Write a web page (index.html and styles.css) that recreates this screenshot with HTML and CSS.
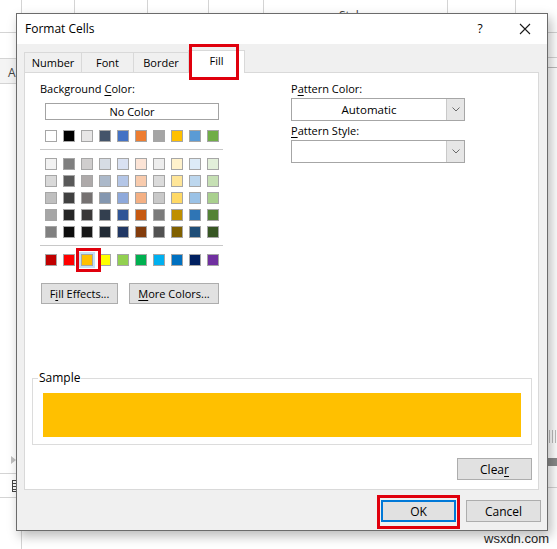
FILE: index.html
```html
<!DOCTYPE html>
<html lang="en">
<head>
<meta charset="utf-8">
<title>Format Cells</title>
<link rel="stylesheet" href="styles.css">
</head>
<body>
<div class="sheet">
  <div class="gl v x21"></div>
  <div class="gl vt x74"></div>
  <div class="gl vt x147"></div>
  <div class="gl vt x208"></div>
  <div class="gl vt x263"></div>
  <div class="gl vt x447"></div>
  <div class="gl vt x515"></div>
  <span class="styles-text">Styles</span>
  <div class="gl hl y32"></div>
  <div class="gl hl y58"></div>
  <div class="left-band"><span>A</span></div>
  <div class="gl hl y83"></div>
  <div class="gl hr y32"></div>
  <div class="gl hr y57"></div>
  <div class="gl hr y67"></div>
  <div class="tri"></div>
  <div class="gl hl y473"></div>
  <div class="sheet-icon"></div>
  <div class="gl hl y497"></div>
  <div class="grip"></div>
  <div class="rbar"></div>
  <div class="gl hr y487"></div>
  <span class="watermark">wsxdn.com</span>
</div>

<div class="dialog">
  <div class="titlebar">
    <span class="title">Format Cells</span>
    <span class="help">?</span>
    <svg class="close" width="12" height="12" viewBox="0 0 12 12"><path d="M1 1 L11 11 M11 1 L1 11" stroke="#1a1a1a" stroke-width="1.1" fill="none"/></svg>
  </div>

  <div class="tabs">
    <div class="tab t-number">Number</div>
    <div class="tab t-font">Font</div>
    <div class="tab t-border">Border</div>
    <div class="tab t-fill active">Fill</div>
  </div>

  <div class="panel">
    <div class="cols">
      <div class="left">
        <div class="label">Background <u>C</u>olor:</div>
        <div class="nocolor">No Color</div>
        <div class="row first">
          <span class="sw" style="background:#FFFFFF"></span><span class="sw" style="background:#000000"></span><span class="sw" style="background:#E7E6E6"></span><span class="sw" style="background:#44546A"></span><span class="sw" style="background:#4472C4"></span><span class="sw" style="background:#ED7D31"></span><span class="sw" style="background:#A5A5A5"></span><span class="sw" style="background:#FFC000"></span><span class="sw" style="background:#5B9BD5"></span><span class="sw" style="background:#70AD47"></span>
        </div>
        <div class="sep"></div>
        <div class="tints">
          <div class="row">
            <span class="sw" style="background:#F2F2F2"></span><span class="sw" style="background:#7F7F7F"></span><span class="sw" style="background:#D0CECE"></span><span class="sw" style="background:#D6DCE4"></span><span class="sw" style="background:#D9E1F2"></span><span class="sw" style="background:#FCE4D6"></span><span class="sw" style="background:#EDEDED"></span><span class="sw" style="background:#FFF2CC"></span><span class="sw" style="background:#DDEBF7"></span><span class="sw" style="background:#E2EFDA"></span>
          </div>
          <div class="row">
            <span class="sw" style="background:#D9D9D9"></span><span class="sw" style="background:#595959"></span><span class="sw" style="background:#AEAAAA"></span><span class="sw" style="background:#ACB9CA"></span><span class="sw" style="background:#B4C6E7"></span><span class="sw" style="background:#F8CBAD"></span><span class="sw" style="background:#DBDBDB"></span><span class="sw" style="background:#FFE699"></span><span class="sw" style="background:#BDD7EE"></span><span class="sw" style="background:#C6E0B4"></span>
          </div>
          <div class="row">
            <span class="sw" style="background:#BFBFBF"></span><span class="sw" style="background:#404040"></span><span class="sw" style="background:#757171"></span><span class="sw" style="background:#8497B0"></span><span class="sw" style="background:#8EA9DB"></span><span class="sw" style="background:#F4B084"></span><span class="sw" style="background:#C9C9C9"></span><span class="sw" style="background:#FFD966"></span><span class="sw" style="background:#9BC2E6"></span><span class="sw" style="background:#A9D08E"></span>
          </div>
          <div class="row">
            <span class="sw" style="background:#A6A6A6"></span><span class="sw" style="background:#262626"></span><span class="sw" style="background:#3A3838"></span><span class="sw" style="background:#333F4F"></span><span class="sw" style="background:#2F5597"></span><span class="sw" style="background:#C65911"></span><span class="sw" style="background:#7B7B7B"></span><span class="sw" style="background:#BF8F00"></span><span class="sw" style="background:#2F75B5"></span><span class="sw" style="background:#548235"></span>
          </div>
          <div class="row">
            <span class="sw" style="background:#808080"></span><span class="sw" style="background:#0D0D0D"></span><span class="sw" style="background:#161616"></span><span class="sw" style="background:#222B35"></span><span class="sw" style="background:#203764"></span><span class="sw" style="background:#833C0C"></span><span class="sw" style="background:#525252"></span><span class="sw" style="background:#806000"></span><span class="sw" style="background:#1F4E78"></span><span class="sw" style="background:#375623"></span>
          </div>
        </div>
        <div class="sep"></div>
        <div class="row std">
          <span class="sw" style="background:#C00000"></span><span class="sw" style="background:#FF0000"></span><span class="sw selected" style="background:#FFC000"></span><span class="sw" style="background:#FFFF00"></span><span class="sw" style="background:#92D050"></span><span class="sw" style="background:#00B050"></span><span class="sw" style="background:#00B0F0"></span><span class="sw" style="background:#0070C0"></span><span class="sw" style="background:#002060"></span><span class="sw" style="background:#7030A0"></span>
        </div>
        <div class="btnrow">
          <button class="btn fill-effects">F<u>i</u>ll Effects...</button>
          <button class="btn more-colors"><u>M</u>ore Colors...</button>
        </div>
      </div>
      <div class="right">
        <div class="label">P<u>a</u>ttern Color:</div>
        <div class="combo">
          <span class="combo-text">Automatic</span>
          <span class="combo-btn"><svg width="8" height="5" viewBox="0 0 8 5"><path d="M0.5 0.5 L4 4 L7.5 0.5" stroke="#6a6a6a" stroke-width="1" fill="none"/></svg></span>
        </div>
        <div class="label"><u>P</u>attern Style:</div>
        <div class="combo">
          <span class="combo-text"></span>
          <span class="combo-btn"><svg width="8" height="5" viewBox="0 0 8 5"><path d="M0.5 0.5 L4 4 L7.5 0.5" stroke="#6a6a6a" stroke-width="1" fill="none"/></svg></span>
        </div>
      </div>
    </div>

    <div class="sample">
      <span class="sample-label">Sample</span>
      <div class="sample-fill"></div>
    </div>

    <div class="clear-row">
      <button class="btn clear">Clea<u>r</u></button>
    </div>
  </div>

  <div class="footer">
    <span class="ok-wrap"><button class="btn ok">OK</button></span>
    <button class="btn cancel">Cancel</button>
  </div>
</div>
</body>
</html>
```

FILE: styles.css
```css
* { box-sizing: border-box; }
html, body { margin: 0; padding: 0; }
body {
  width: 557px;
  height: 549px;
  overflow: hidden;
  position: relative;
  background: #ffffff;
  font-family: "Open Sans", "Noto Sans", sans-serif;
  font-size: 11px;
  color: #000;
}
u { text-decoration: underline; text-underline-offset: 2px; }

/* ---------- background spreadsheet ---------- */
.sheet { position: absolute; inset: 0; }
.gl { position: absolute; background: #d4d4d4; }
.v { top: 0; bottom: 0; width: 1px; }
.vt { top: 0; height: 14px; width: 1px; }
.x21 { left: 21px; }
.x74 { left: 74px; }
.x147 { left: 147px; }
.x208 { left: 208px; }
.x263 { left: 263px; }
.x447 { left: 447px; }
.x515 { left: 515px; }
.hl { left: 0; width: 17px; height: 1px; }
.hr { left: 547px; width: 10px; height: 1px; }
.y32 { top: 32px; }
.y57 { top: 57px; }
.y58 { top: 58px; }
.y67 { top: 67px; background: #bcbcbc; }
.y83 { top: 83px; }
.y473 { top: 473px; }
.y487 { top: 487px; }
.y497 { top: 497px; }
.styles-text {
  position: absolute; left: 339px; top: 9px;
  font-size: 12px; color: #444; line-height: 14px;
}
.left-band {
  position: absolute; left: 0; top: 59px; width: 17px; height: 24px;
  background: #f4f4f4; font-size: 12px; color: #444;
  padding: 7px 0 0 8px; line-height: 14px;
}
.tri {
  position: absolute; left: 11px; top: 456px; width: 0; height: 0;
  border-left: 5px solid #c0c0c0; border-top: 4px solid transparent; border-bottom: 4px solid transparent;
}
.sheet-icon {
  position: absolute; left: 12px; top: 480px; width: 6px; height: 12px;
  border: 1px solid #444; border-right: none;
  background: repeating-linear-gradient(#fff 0 2px, #444 2px 3px);
}
.grip {
  position: absolute; left: 549px; top: 430px; width: 8px; height: 13px;
  background: repeating-linear-gradient(90deg, #bdbdbd 0 1px, #fff 1px 3px);
}
.rbar { position: absolute; left: 548px; top: 458px; width: 9px; height: 8px; background: #8a8a8a; }
.watermark {
  position: absolute; left: 484px; top: 531px;
  font-family: "Liberation Sans", Arial, sans-serif; font-size: 13px; color: #1e1e1e;
  line-height: 16px;
}

/* ---------- dialog ---------- */
.dialog {
  position: relative;
  z-index: 1;
  margin: 13px 0 0 16px;
  width: 532px;
  height: 518px;
  border: 1px solid #6b6b6b;
  background: #f0f0f0;
  box-shadow: 3px 5px 11px rgba(0, 0, 0, 0.28);
  display: flex;
  flex-direction: column;
}
.titlebar {
  height: 30px;
  flex: 0 0 30px;
  background: #fff;
  display: flex;
  align-items: center;
  padding: 0 16px 1px 8px;
}
.title { font-size: 12px; flex: 1; }
.help { font-size: 12px; width: 10px; text-align: center; margin-right: 34px; }
.close { display: block; }

/* tabs */
.tabs {
  position: relative;
  z-index: 2;
  display: flex;
  align-items: flex-end;
  height: 20px;
  margin: 8px 0 0 7px;
}
.tab {
  height: 20px;
  display: flex;
  align-items: center;
  justify-content: center;
  border-top: 1px solid #d9d9d9;
  border-left: 1px solid #d9d9d9;
  background: #f0f0f0;
  padding-bottom: 1px;
}
.t-number { width: 57px; }
.t-font { width: 52px; }
.t-border { width: 55px; }
.t-fill { width: 57px; }
.tab.active {
  position: relative;
  height: 23px;
  margin-bottom: -1px;
  background: #fff;
  border-right: 1px solid #d9d9d9;
  padding-bottom: 3px;
}
.tab.active::after {
  content: "";
  position: absolute;
  top: -7px; bottom: -7px; left: 0; right: 5px;
  border: 3px solid #e0000d;
}

/* panel */
.panel {
  flex: 0 0 418px;
  height: 418px;
  margin: 0 8px 0 7px;
  border: 1px solid #d9d9d9;
  background: #fff;
}
.cols { display: flex; padding: 8px 0 0 15px; }
.left { width: 251px; }
.right { width: 174px; }
.label { line-height: 16px; height: 16px; white-space: nowrap; }

.nocolor {
  margin: 6px 0 0 5px;
  width: 174px;
  height: 17px;
  border: 1px solid #a3a3a3;
  text-align: center;
  line-height: 15px;
}
.row { display: flex; gap: 6px; margin-left: 5px; height: 12px; }
.row.first { margin-top: 10px; }
.tints { display: flex; flex-direction: column; gap: 5px; margin-top: 8px; }
.row.std { margin-top: 8px; }
.sep { height: 1px; background: #c8c8c8; width: 183px; margin-top: 7px; }
.sw {
  display: block;
  width: 12px;
  height: 12px;
  border: 1px solid #a6a6a6;
}
.sw.selected {
  position: relative;
  box-shadow: 0 0 0 2px #c3e2f7;
}
.sw.selected::after {
  content: "";
  position: absolute;
  left: -6px; right: -9px; top: -7px; bottom: -7px;
  border: 3px solid #e0000d;
}

.btn {
  font-family: inherit;
  font-size: 11px;
  color: #000;
  background: #e1e1e1;
  border: 1px solid #adadad;
  padding: 0;
  margin: 0;
  height: 21px;
  line-height: 17px;
}
.btnrow { display: flex; margin: 17px 0 0 1px; gap: 11px; }
.fill-effects { width: 77px; }
.more-colors { width: 90px; }

.combo {
  display: flex;
  width: 174px;
  height: 23px;
  border: 1px solid #a6a6a6;
  margin: 1px 0 2px 0;
  background: #fff;
}
.combo-text { flex: 1; text-align: center; line-height: 21px; font-size: 11.5px; }
.combo-btn {
  width: 18px;
  background: #e6e6e6;
  border-left: 1px solid #c9c9c9;
  display: flex;
  align-items: center;
  justify-content: center;
}
.combo-btn svg { display: block; }

/* sample */
.sample {
  margin: 74px 6px 0 7px;
  border: 1px solid #dcdcdc;
  padding: 0 10px 7px 10px;
}
.sample-label {
  display: block;
  width: max-content;
  margin: -9px 0 0 -5px;
  padding: 0 1px;
  line-height: 16px;
  background: #fff;
  font-size: 12px;
}
.sample-fill { height: 44px; margin-top: 7px; background: #ffc000; }

.clear-row { display: flex; justify-content: flex-end; margin: 13px 6px 0 0; }
.clear { width: 75px; height: 22px; font-size: 12px; }

/* footer */
.footer {
  flex: 1;
  display: flex;
  justify-content: flex-end;
  gap: 10px;
  padding: 10px 6px 0 0;
}
.ok-wrap { position: relative; display: block; height: 22px; }
.ok-wrap::after {
  content: "";
  position: absolute;
  left: -4px; right: -4px; top: -5px; bottom: -7px;
  border: 3px solid #e0000d;
}
.ok, .cancel { width: 75px; height: 22px; font-size: 12px; }
.ok { border: 2px solid #0078d7; }
```
